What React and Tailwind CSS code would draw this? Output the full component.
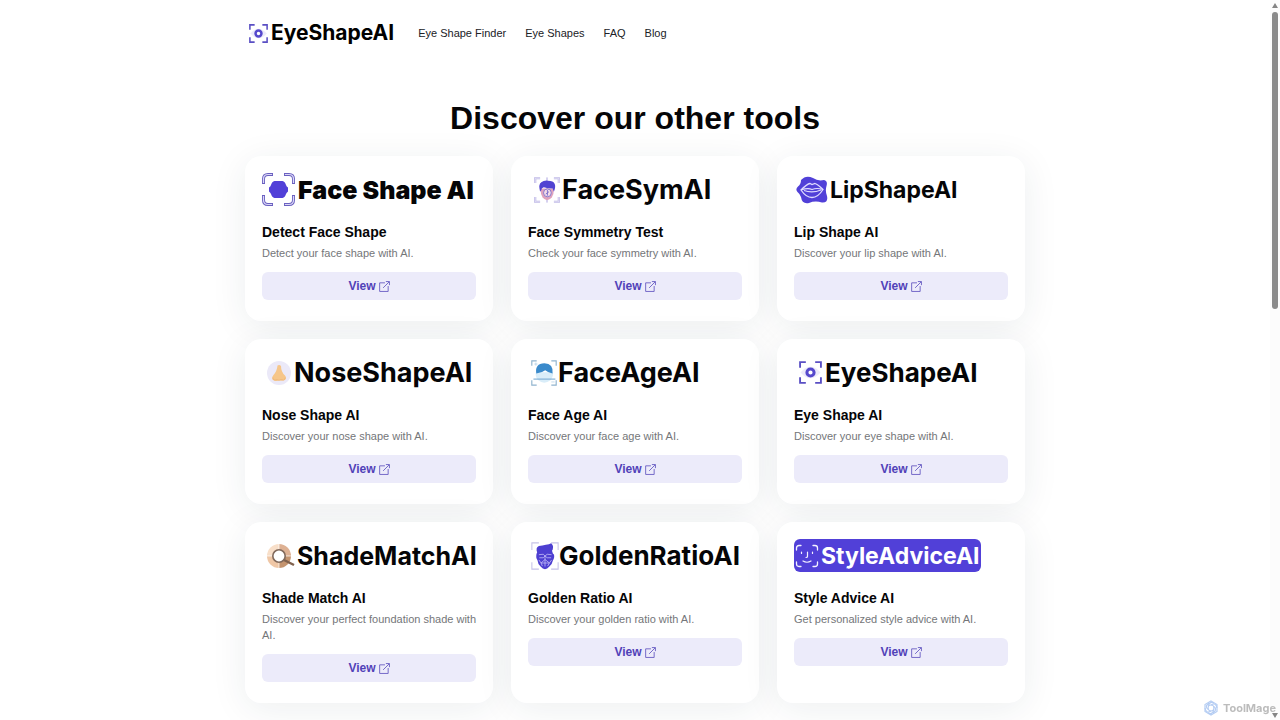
import React from "react";

function Corners({ color, width = 1.5, inset = 1, arm = 7, size = 32 }) {
  const a = inset, b = size - inset, c = inset + arm, d = size - inset - arm;
  return (
    <path
      d={`M${a} ${c}V${a}H${c}M${d} ${a}H${b}V${c}M${b} ${d}V${b}H${d}M${c} ${b}H${a}V${d}`}
      fill="none" stroke={color} strokeWidth={width}
    />
  );
}

function EyeIcon({ className }) {
  return (
    <svg viewBox="0 0 32 32" className={className} aria-hidden="true">
      <path d="M2 16Q16 0 30 16Q16 32 2 16Z" fill="#eceafa" />
      <Corners color="#5a4fc4" width={2.6} inset={1.5} arm={8} />
      <circle cx="16" cy="16" r="5" fill="#fff" stroke="#5548cc" strokeWidth="4.2" />
    </svg>
  );
}

function FaceShapeIcon({ className }) {
  const d = "M1.5 9.500V6Q1.500 1.500 6 1.500H9.500M23.500 1.500H27Q31.500 1.500 31.500 6V9.500M31.500 23.500V27Q31.500 31.500 27 31.500H23.500M9.500 31.500H6Q1.500 31.500 1.500 27V23.500";
  return (
    <svg viewBox="0 0 33 33" className={className} aria-hidden="true">
      <path d={d} fill="none" stroke="#6a60c0" strokeWidth="3" strokeLinecap="square" />
      <path d={d} fill="none" stroke="#dcd9f7" strokeWidth="1.2" strokeLinecap="square" />
      <path d="M12.500 8H20.500Q23 8.500 24 12Q24.500 13.500 26 14.500V18.500Q24.500 19.500 24 21Q23 24.500 20.500 25H12.500Q10 24.500 9 21Q8.500 19.500 7 18.500V14.500Q8.500 13.500 9 12Q10 8.500 12.500 8Z" fill="#5140d8" />
    </svg>
  );
}

function FaceSymIcon({ className }) {
  return (
    <svg viewBox="0 0 32 32" className={className} aria-hidden="true">
      <Corners color="#b9b2e4" width={2.6} arm={6} inset={1.5} />
      <Corners color="#f5f4fd" width={0.8} arm={6} inset={1.5} />
      <path d="M16 0.500V31.500" stroke="#9a90da" strokeWidth="1" />
      <path d="M8 14Q8 21 10.500 25Q13 28.500 16 28.500Q19.500 28.500 22 25Q24.500 21 24.500 14Z" fill="#dfa3bd" />
      <path d="M7.500 18Q5 9 9 6.500Q12 4 17 4.500Q24 4.500 25.500 8.500Q27 12 24.500 18L23 14Q17 14 12 12.500Q9 13.500 9 16Z" fill="#5143d2" />
      <circle cx="16.500" cy="19.500" r="4.800" fill="#f3dce8" stroke="#8679cf" strokeWidth="1.2" />
      <path d="M16.500 16V23M14.500 21L18.500 18" stroke="#776acb" strokeWidth="1.1" />
    </svg>
  );
}

function LipIcon({ className }) {
  return (
    <svg viewBox="0 0 32 28" className={className} aria-hidden="true">
      <path d="M5 4Q10-1.500 17 2Q22 5.500 28 4Q32 5 30.500 10Q29 15 31 20Q32.500 27 26 26.500Q19 24.500 13 27Q6 28.500 5 21Q4 18 1.500 16Q-1 13.500 2 10.500Q5 8 5 4Z" fill="#5140d8" />
      <path d="M5 14Q11 8 14 7.500L16 8.500L19 7.500Q22 8.500 27 13.500Q22 21.500 16 21.500Q10 21.500 5 14Z" fill="none" stroke="#e0dcff" strokeWidth="1.3" />
      <path d="M5 14Q12 11.500 16 13.500Q21 11.500 27 13.500M8 14.500Q16 17.500 25 14" fill="none" stroke="#e0dcff" strokeWidth="1.1" />
    </svg>
  );
}

function NoseIcon({ className }) {
  return (
    <svg viewBox="0 0 24 24" className={className} aria-hidden="true">
      <circle cx="12" cy="12" r="12" fill="#ebe9f8" />
      <path d="M10.500 4.500Q12.500 3.500 14 5Q14 11 18 14.500Q20 17 18 19Q15.500 20 12.500 19.500Q8 20.500 6 19Q4 17 6.500 14Q10 10 10.500 4.500Z" fill="#f6c68a" />
      <path d="M6 16.500Q5.500 19 8 19L10 18.500Q12 20 14 18.500L16.500 19Q18.500 18.500 18 16.500" fill="none" stroke="#edb677" strokeWidth="0.8" />
    </svg>
  );
}

function FaceAgeIcon({ className }) {
  return (
    <svg viewBox="0 0 32 32" className={className} aria-hidden="true">
      <Corners color="#8fb3ce" width={1.4} arm={6} />
      <path d="M6 15H27Q28 20 24 25Q16 31 9 25Q5 21 6 15Z" fill="#d9edf9" />
      <path d="M6.500 16.500Q4.500 4.500 16.500 4Q28 4.500 26.500 16.500Q21 15.500 17.500 12.500Q13 16 6.500 16.500Z" fill="#3a8acb" />
      <path d="M3 23.500H30" stroke="#74a8d0" strokeWidth="1.3" />
      <path d="M4 5H8M6 3V7M25 27H29" stroke="#a9cae3" strokeWidth="0.8" />
    </svg>
  );
}

function ShadeIcon({ className }) {
  return (
    <svg viewBox="0 0 28 24" className={className} aria-hidden="true">
      <path d="M12 12V0A12 12 0 0 0 0 12Z" fill="#f8dfc9" />
      <path d="M12 12H24A12 12 0 0 0 12 0Z" fill="#deb193" />
      <path d="M12 12H0A12 12 0 0 0 12 24Z" fill="#efc7a6" />
      <path d="M12 12V24A12 12 0 0 0 24 12Z" fill="#c4946f" />
      <path d="M12 0V24M0 12H24" stroke="#fff" strokeWidth="0.7" />
      <path d="M17 16L27 21" stroke="#80624e" strokeWidth="2.4" />
      <circle cx="12" cy="12" r="6.200" fill="#fff" stroke="#80695b" strokeWidth="1.6" />
    </svg>
  );
}

function GoldenIcon({ className }) {
  return (
    <svg viewBox="0 0 32 32" className={className} aria-hidden="true">
      <Corners color="#c6c2e8" width={1.2} arm={8} />
      <path d="M7 12Q5 6 9 4.500Q13 4 17 3Q21 3 23 1.500Q26 4 25 7.500Q25 9 24 10L25 13Q27 14 26.500 17Q26 20 25 21Q24 26 21 28Q18.500 31 16 31Q13.500 31 11 28Q8 26 7.500 21Q5.500 19 6 16Q6 13.500 7 12Z" fill="#4d3fd1" />
      <path d="M9 14.500L14 14L16 16L18.500 14L23.500 14.500M9.500 18H14L16 16L18.500 18H23M16 16V28M16 20L11.500 24H21L16 20M9 20.500L11.500 24L13 27.500M23.500 20.500L21 24L19 27.500" fill="none" stroke="#c4bdf7" strokeWidth="0.9" />
    </svg>
  );
}

function StyleIcon({ className }) {
  return (
    <svg viewBox="0 0 24 24" className={className} fill="none" stroke="#f3f1ff" strokeWidth="1.300" strokeLinecap="round" aria-hidden="true">
      <path d="M1.500 6V4Q1.500 1.500 4 1.500H6M18 1.500H20Q22.500 1.500 22.500 4V6M22.500 18V20Q22.500 22.500 20 22.500H18M6 22.500H4Q1.500 22.500 1.500 20V18" />
      <path d="M6.500 8V9.500M17.500 8V9.500M12.500 8V12.500Q12.500 13.500 11 13.500M8 17Q12 19.500 16 17" strokeWidth="1.200" />
    </svg>
  );
}

function ExternalIcon() {
  return (
    <svg viewBox="0 0 12 12" className="size-[11px]" fill="none" stroke="#6a5fc4" strokeWidth="1" aria-hidden="true">
      <path d="M6.500 2H0.700V11.400H10V5.500M7.500 0.600H11.400V4.500M11.200 0.800L4.500 7.500" />
    </svg>
  );
}

const tools = [
  { brand: "Face Shape AI", Icon: FaceShapeIcon, icon: "size-[33px]", logo: "gap-[3px]", text: "text-[25px] font-black", title: "Detect Face Shape", desc: "Detect your face shape with AI." },
  { brand: "FaceSymAI", Icon: FaceSymIcon, icon: "size-[26px]", logo: "gap-0.5 pl-1.5", text: "text-[27px] font-bold", title: "Face Symmetry Test", desc: "Check your face symmetry with AI." },
  { brand: "LipShapeAI", Icon: LipIcon, icon: "h-7 w-8", logo: "gap-0.5 pl-0.5", text: "text-[23px] font-bold", title: "Lip Shape AI", desc: "Discover your lip shape with AI." },
  { brand: "NoseShapeAI", Icon: NoseIcon, icon: "size-6", logo: "gap-[3px] pl-[5px]", text: "text-[27px] font-bold", title: "Nose Shape AI", desc: "Discover your nose shape with AI." },
  { brand: "FaceAgeAI", Icon: FaceAgeIcon, icon: "size-[26px]", logo: "gap-px pl-[3px]", text: "text-[27px] font-bold", title: "Face Age AI", desc: "Discover your face age with AI." },
  { brand: "EyeShapeAI", Icon: EyeIcon, icon: "size-[23px]", logo: "gap-[3px] pl-[5px]", text: "text-[26px] font-bold", title: "Eye Shape AI", desc: "Discover your eye shape with AI." },
  { brand: "ShadeMatchAI", Icon: ShadeIcon, icon: "h-6 w-7", logo: "gap-0.5 pl-[5px]", text: "text-[25px] font-bold", title: "Shade Match AI", desc: "Discover your perfect foundation shade with AI." },
  { brand: "GoldenRatioAI", Icon: GoldenIcon, icon: "size-7", logo: "pl-[3px]", text: "text-[26px] font-bold", title: "Golden Ratio AI", desc: "Discover your golden ratio with AI." },
  { brand: "StyleAdviceAI", Icon: StyleIcon, icon: "size-6", logo: "gap-0.5 rounded-md bg-[#5140d8] px-px text-white", text: "text-[23px] font-bold", title: "Style Advice AI", desc: "Get personalized style advice with AI." },
];

function ToolCard({ tool }) {
  const { Icon } = tool;
  return (
    <article className="rounded-2xl bg-white px-[17px] pt-[17px] pb-[21px] shadow-[0_6px_36px_rgba(30,45,60,0.08)]">
      <div className={`flex h-[33px] w-fit items-center whitespace-nowrap ${tool.logo}`}>
        <Icon className={`shrink-0 ${tool.icon}`} />
        <span className={`font-[Inter,sans-serif] leading-8 ${tool.text}`}>{tool.brand}</span>
      </div>
      <h2 className="mt-4 text-[14px] leading-5 font-bold">{tool.title}</h2>
      <p className="mt-[3px] text-[11px] leading-4 text-[#747679]">{tool.desc}</p>
      <a href="#" className="mt-[11px] flex h-7 items-center justify-center gap-[3px] rounded-md bg-[#ecebfa] text-[12px] font-bold text-[#5141b8]">
        View <ExternalIcon />
      </a>
    </article>
  );
}

export default function App() {
  return (
    <div className="flex h-screen overflow-hidden bg-white font-['Liberation_Sans',Arial,sans-serif] text-[#050507]">
      <div className="min-w-0 flex-1 overflow-hidden">
        <div className="mx-auto max-w-[780px]">
          <header className="flex h-[66px] items-center gap-6">
            <a href="#" className="flex items-center gap-[3px] pl-1 text-black">
              <EyeIcon className="size-[19px]" />
              <span className="font-[Inter,sans-serif] text-[21px] leading-8 font-bold">EyeShapeAI</span>
            </a>
            <nav className="flex gap-[19px] text-[11px] text-[#202126]">
              <a href="#">Eye Shape Finder</a>
              <a href="#">Eye Shapes</a>
              <a href="#">FAQ</a>
              <a href="#">Blog</a>
            </nav>
          </header>
          <main>
            <h1 className="pt-8 pb-[18px] text-center text-[32px] leading-10 font-bold">Discover our other tools</h1>
            <div className="grid grid-cols-3 gap-[18px]">
              {tools.map((tool) => <ToolCard key={tool.title} tool={tool} />)}
            </div>
          </main>
        </div>
      </div>
      <div className="flex w-2.5 shrink-0 flex-col items-center bg-[#fcfcfc]" aria-hidden="true">
        <svg viewBox="0 0 10 12" className="h-3 w-2.5"><path d="M5 3L8 8H2Z" fill="#858585" /></svg>
        <div className="h-[297px] w-1.5 rounded-full bg-[#8b8b8b]" />
        <svg viewBox="0 0 10 12" className="mt-auto h-3 w-2.5"><path d="M5 10L2 5H8Z" fill="#858585" /></svg>
      </div>
      <div className="fixed right-1 bottom-1 flex items-center gap-1 font-[Inter,sans-serif] text-[11px] font-bold text-[#bcbcbc]">
        <svg viewBox="0 0 16 16" className="size-4" fill="none" stroke="#b5cdf3" strokeWidth="1.200" aria-hidden="true">
          <path d="M8 1L14 4.500V11.500L8 15L2 11.500V4.500Z" />
          <path d="M8 5Q13 2 14 8M10.600 6.500Q15 9 10 13M10.600 9.500Q10 15 5 13M8 11Q3 14 2 8M5.400 9.500Q1 7 6 3M5.400 6.500Q6 1 11 3" />
          <circle cx="8" cy="8" r="3" />
        </svg>
        ToolMage
      </div>
    </div>
  );
}
